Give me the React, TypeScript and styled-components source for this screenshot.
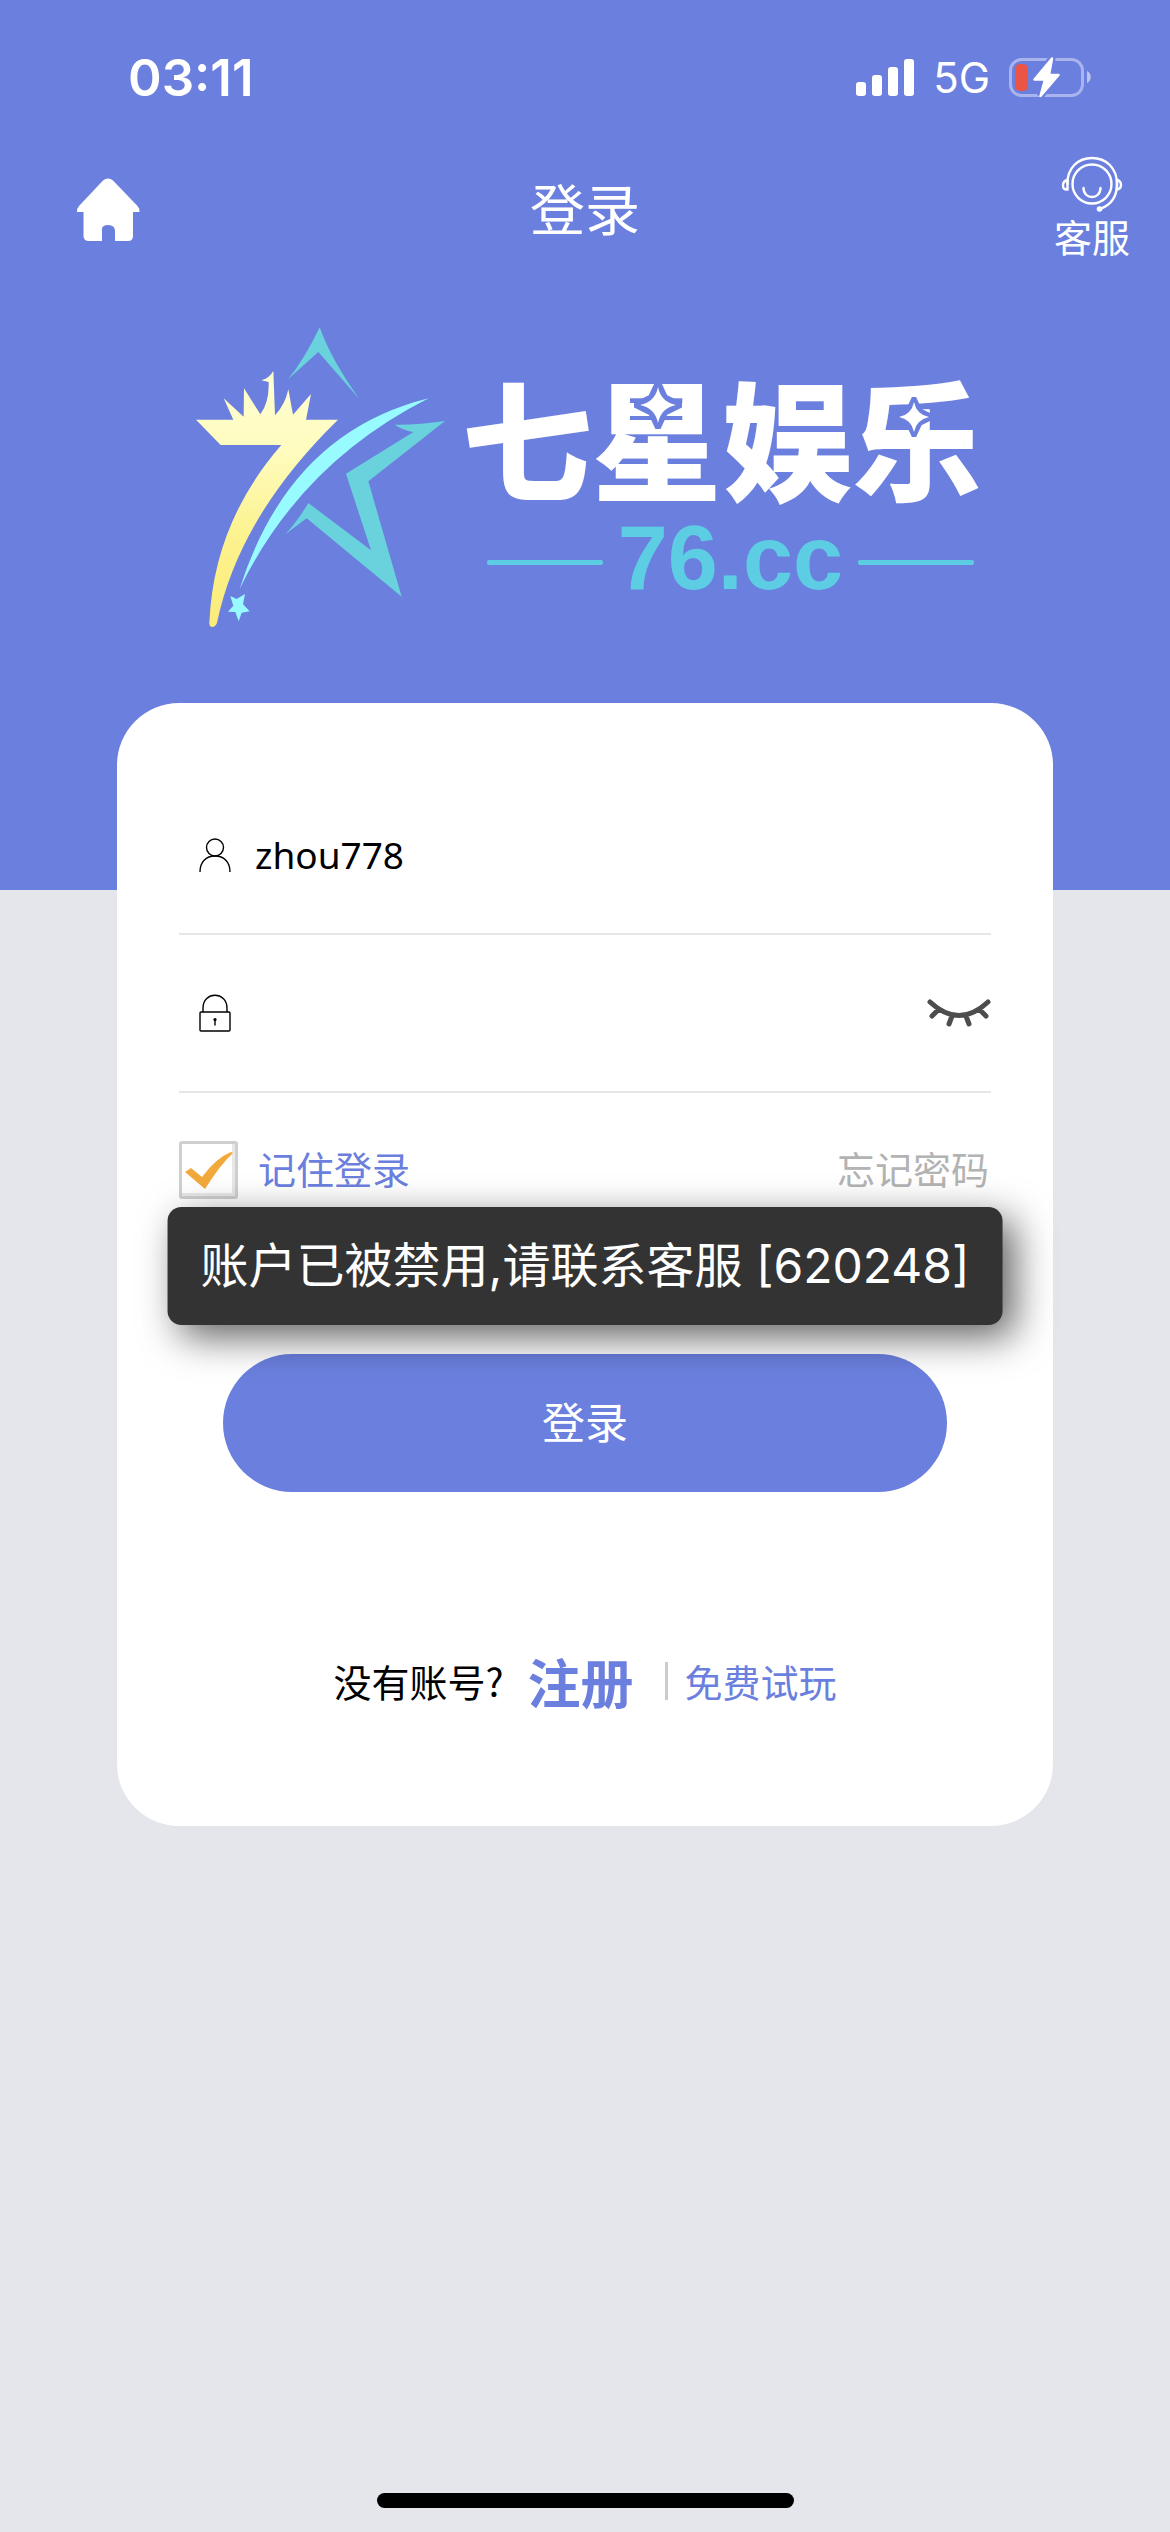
import React, { useState } from "react";
import styled, { createGlobalStyle } from "styled-components";

const blue = "#6b7fde";
const cjk = `"Noto Sans CJK SC", sans-serif`;

const Global = createGlobalStyle`
  *, *::before, *::after { box-sizing: border-box; }
  body {
    margin: 0;
    background: #e5e6eb;
    font-family: Inter, ${cjk};
    color: #000;
  }
  button, input { font: inherit; color: inherit; }
  button { background: none; border: 0; padding: 0; cursor: pointer; }
  a { text-decoration: none; }
  svg { display: block; flex: none; }
`;

const Page = styled.div`
  min-height: 100vh;
  display: flex;
  flex-direction: column;
  background: linear-gradient(${blue} 890px, #e5e6eb 890px);
`;

const StatusBar = styled.div`
  display: flex;
  justify-content: space-between;
  align-items: center;
  height: 156px;
  padding: 0 78px 0 128px;
  color: #fff;
`;

const Clock = styled.span`
  font-size: 51px;
  line-height: 60px;
  font-weight: 600;
`;

const Signals = styled.div`
  display: flex;
  align-items: center;
  gap: 19px;
  font-size: 42px;
  line-height: 60px;
`;

const TopBar = styled.header`
  display: grid;
  grid-template-columns: 1fr auto 1fr;
  align-items: center;
  height: 108px;
  padding: 0 40px;
  color: #fff;
`;

const Title = styled.h1`
  margin: 0;
  font-size: 55px;
  line-height: 80px;
  font-weight: 400;
`;

const HomeLink = styled.a`
  justify-self: start;
  padding-left: 36px;
`;

const Support = styled.a`
  justify-self: end;
  display: flex;
  flex-direction: column;
  align-items: center;
  color: #fff;
  font-size: 38px;
  line-height: 52px;
`;

const Brand = styled.div`
  display: flex;
  justify-content: center;
  height: 439px;
  padding: 62px 0 0 8px;
`;

const Wordmark = styled.div`
  display: flex;
  flex-direction: column;
  padding: 55px 0 0 16px;
`;

const BrandName = styled.div`
  position: relative;
  color: #fff;
  font-family: "Liberation Sans", ${cjk};
  font-size: 130px;
  line-height: 130px;
  font-weight: 900;
  white-space: nowrap;
`;

const Sparkle = styled.svg<{ $left: number; $top: number }>`
  position: absolute;
  left: ${(p) => p.$left}px;
  top: ${(p) => p.$top}px;
`;

const Domain = styled.div`
  display: flex;
  align-items: center;
  justify-content: flex-end;
  gap: 15px;
  margin-top: 2px;
  padding-right: 8px;
  color: #5ccde2;
  font-family: "Liberation Sans", sans-serif;
  font-size: 90px;
  line-height: 90px;
  font-weight: 700;

  &::before, &::after {
    content: "";
    width: 116px;
    height: 5px;
    margin-top: 8px;
    border-radius: 2px;
    background: currentColor;
  }
`;

const Card = styled.form`
  position: relative;
  width: 80%;
  margin: 0 auto;
  padding: 74px 62px 105px;
  border-radius: 62px;
  background: #fff;
`;

const Field = styled.label`
  display: flex;
  align-items: center;
  height: 158px;
  padding-left: 20px;
  border-bottom: 2px solid #e6e6e6;
`;

const FieldInput = styled.input`
  flex: 1;
  min-width: 0;
  margin-left: 24px;
  padding: 0;
  border: 0;
  outline: 0;
  background: none;
  font-family: "Noto Sans", ${cjk};
  font-size: 37px;
  line-height: 52px;
`;

const Options = styled.div`
  display: flex;
  align-items: center;
  justify-content: space-between;
  padding: 48px 2px 0 0;
  font-size: 38px;
  line-height: 58px;
`;

const Remember = styled.label`
  display: flex;
  align-items: center;
  gap: 20px;
  color: ${blue};
`;

const CheckBox = styled.span`
  display: grid;
  width: 59px;
  height: 58px;
  border: 3px solid #cfcfcf;
  border-radius: 3px;
  box-shadow: inset -3px -3px 0 #e8e8e8;

  > * { grid-area: 1 / 1; }
`;

const CheckInput = styled.input`
  appearance: none;
  margin: 0;
  &:not(:checked) + svg { visibility: hidden; }
`;

const Forgot = styled.a`
  color: #b3b3b3;
`;

const Submit = styled.button`
  display: block;
  width: calc(100% - 88px);
  height: 138px;
  margin: 155px auto 0;
  border-radius: 69px;
  background: ${blue};
  color: #fff;
  font-size: 43px;
  line-height: 60px;
`;

const Links = styled.div`
  display: flex;
  align-items: center;
  justify-content: center;
  margin-top: 149px;
  font-family: ${cjk};
  font-size: 38px;
  line-height: 80px;
  white-space: nowrap;

  a { color: ${blue}; }
`;

const Register = styled.a`
  margin: 0 31px 0 24px;
  font-size: 53px;
  font-weight: 700;
`;

const Separator = styled.span`
  width: 3px;
  height: 38px;
  margin-right: 17px;
  background: #ccc;
`;

const Toast = styled.div`
  position: absolute;
  top: 504px;
  left: 50%;
  transform: translateX(-50%);
  padding: 29px 33px;
  border-radius: 14px;
  background: #333;
  box-shadow: 12px 12px 38px rgba(0, 0, 0, 0.62);
  color: #fff;
  font-size: 48px;
  line-height: 60px;
  white-space: nowrap;
`;

const HomeIndicator = styled.div`
  width: 417px;
  height: 15px;
  margin: auto auto 24px;
  border-radius: 8px;
  background: #000;
`;

const SignalIcon = () => (
  <svg width="58" height="38" viewBox="0 0 58 38" fill="#fff" aria-hidden="true">
    <rect x="0" y="23" width="10" height="14" rx="3" />
    <rect x="16" y="16" width="10" height="21" rx="3" />
    <rect x="32" y="8" width="10" height="29" rx="3" />
    <rect x="48" y="0" width="10" height="37" rx="3" />
  </svg>
);

const BatteryIcon = () => (
  <svg width="83" height="42" viewBox="0 0 83 42" aria-hidden="true">
    <rect x="1.5" y="2.500" width="72" height="36" rx="11" fill="none" stroke="#fff" strokeOpacity=".42" strokeWidth="3" />
    <path d="M78 14c5 2 5 10 0 12z" fill="#fff" fillOpacity=".55" />
    <rect x="6" y="7" width="13" height="27" rx="5" fill="#ec5545" />
    <path d="M43 1.500 25.500 22.500H36L31.500 39 49.500 18H40Z" fill={blue} stroke={blue} strokeWidth="7" />
    <path d="M43 1.500 25.500 22.500H36L31.500 39 49.500 18H40Z" fill="#fff" stroke="#fff" strokeWidth="2.500" strokeLinejoin="round" />
  </svg>
);

const HomeIcon = () => (
  <svg width="64" height="64" viewBox="0 0 64 64" fill="#fff" aria-hidden="true">
    <path d="M27 2.500Q32-1.500 37 2.500L61.500 28Q63.500 30 63.500 34H57V58Q57 63 52 63H39V53Q39 47 32 47T26 53V63H13Q7.500 63 7.500 58V34H1Q1 30 3 28Z" />
  </svg>
);

const HeadsetIcon = () => (
  <svg width="62" height="56" viewBox="0 0 62 56" fill="none" stroke="#fff" strokeWidth="2.400" aria-hidden="true">
    <circle cx="31" cy="28" r="19.500" />
    <path d="M6.500 28C6 12 17 2 31 2S56 12 56 28C56 40 50 49 39 53M22.500 32c0 12 17 12 17 0" strokeLinecap="round" />
    <path d="M6.500 24Q2 25 2 29.500T6.500 33.500zM56 24q4 1 4 5T56 33.500z" />
    <circle cx="38.500" cy="53" r="1.600" fill="#fff" />
  </svg>
);

const Emblem = () => (
  <svg width="250" height="302" viewBox="50 50 750 906" role="img" aria-label="七星娱乐">
    <defs>
      <linearGradient id="gold" x1="0" y1="0" x2="0" y2="1">
        <stop offset="0" stopColor="#ffffd2" />
        <stop offset=".3" stopColor="#fffcc0" />
        <stop offset=".65" stopColor="#fcf28e" />
        <stop offset="1" stopColor="#fbec78" />
      </linearGradient>
    </defs>
    <path fill="url(#gold)" d="M50 331H162L133 267 193 322 194 237 243 315Q270 280 268 218L246 213Q270 207 282 185L287 318Q318 285 327 240L341 316 395 254 380 331H476Q180 620 113 940Q108 953 98 953Q90 952 90 940Q103 640 306 407H124Z" />
    <path fill="#69d2dc" d="M421 54Q455 150 540 269L417 128 326 210Q375 150 421 54ZM646 346Q720 347 797 335L567 516 667 862 382 627 318 675Q355 635 387 581L575 723 500 493 702 368Q670 363 646 346Z" />
    <path fill="#98fbff" d="M748 267Q330 370 181 838Q365 460 748 267ZM153 860 172 869 197 854 191 885 211 906 187 910 178 936 168 908 146 907 162 889Z" />
  </svg>
);

const UserIcon = () => (
  <svg width="32" height="34" viewBox="0 0 32 34" fill="none" stroke="#000" strokeWidth="1.400" aria-hidden="true">
    <circle cx="16" cy="9.500" r="8.500" />
    <path d="M1 34C1 24 7 18 16 18s15 6 15 16" />
  </svg>
);

const LockIcon = () => (
  <svg width="32" height="38" viewBox="0 0 32 38" fill="none" stroke="#000" strokeWidth="1.400" aria-hidden="true">
    <path d="M4 18V14C4-3 28-3 28 14V18" />
    <rect x="1" y="18" width="30" height="19" rx="1" />
    <circle cx="16" cy="25.500" r="1.600" fill="#000" stroke="none" />
    <path d="M16 25v6.500" />
  </svg>
);

const ClosedEyeIcon = () => (
  <svg width="64" height="30" viewBox="0 0 64 30" fill="none" stroke="#4d4d4d" strokeWidth="5" strokeLinecap="round" aria-hidden="true">
    <path d="M3 4Q32 31 61 4M12 11 5 18M52 11 59 18M25 18 22 26M39 18 42 26" />
  </svg>
);

const Tick = () => (
  <svg width="53" height="52" viewBox="0 0 53 52" aria-hidden="true">
    <path d="M3 28 9 24 20 33Q34 14 49 8L51 9Q38 21 23 45Z" fill="#f2a93b" />
  </svg>
);

const FourPoint = () => (
  <>
    <path d="M20 0 26 13 40 20 26 27 20 40 14 27 0 20 14 13Z" fill={blue} stroke={blue} strokeWidth="8" />
    <path d="M20 2Q23 17 38 20Q23 23 20 38Q17 23 2 20Q17 17 20 2Z" fill="#fff" />
  </>
);

export default function App() {
  const [user, setUser] = useState("zhou778");
  const [password, setPassword] = useState("");
  const [visible, setVisible] = useState(false);
  const [remember, setRemember] = useState(true);

  return (
    <>
      <Global />
      <Page>
        <StatusBar>
          <Clock>03:11</Clock>
          <Signals>
            <SignalIcon />
            <span>5G</span>
            <BatteryIcon />
          </Signals>
        </StatusBar>
        <TopBar>
          <HomeLink href="#home" aria-label="首页"><HomeIcon /></HomeLink>
          <Title>登录</Title>
          <Support href="#support"><HeadsetIcon />客服</Support>
        </TopBar>
        <Brand>
          <Emblem />
          <Wordmark>
            <BrandName>
              七星娱乐
              <Sparkle $left={172} $top={0} width="48" height="48" viewBox="-4 -4 48 48" aria-hidden="true"><FourPoint /></Sparkle>
              <Sparkle $left={432} $top={16} width="40" height="40" viewBox="-4 -4 48 48" aria-hidden="true"><FourPoint /></Sparkle>
            </BrandName>
            <Domain>76.cc</Domain>
          </Wordmark>
        </Brand>
        <Card onSubmit={(e) => e.preventDefault()}>
          <Field>
            <UserIcon />
            <FieldInput aria-label="用户名" value={user} onChange={(e) => setUser(e.target.value)} />
          </Field>
          <Field>
            <LockIcon />
            <FieldInput aria-label="密码" type={visible ? "text" : "password"} value={password} onChange={(e) => setPassword(e.target.value)} />
            <button type="button" aria-label="显示密码" onClick={() => setVisible(!visible)}><ClosedEyeIcon /></button>
          </Field>
          <Options>
            <Remember>
              <CheckBox>
                <CheckInput type="checkbox" checked={remember} onChange={(e) => setRemember(e.target.checked)} />
                <Tick />
              </CheckBox>
              记住登录
            </Remember>
            <Forgot href="#forgot">忘记密码</Forgot>
          </Options>
          <Submit type="submit">登录</Submit>
          <Links>
            <span>没有账号?</span>
            <Register href="#register">注册</Register>
            <Separator />
            <a href="#trial">免费试玩</a>
          </Links>
          <Toast role="alert">账户已被禁用,请联系客服 [620248]</Toast>
        </Card>
        <HomeIndicator />
      </Page>
    </>
  );
}
